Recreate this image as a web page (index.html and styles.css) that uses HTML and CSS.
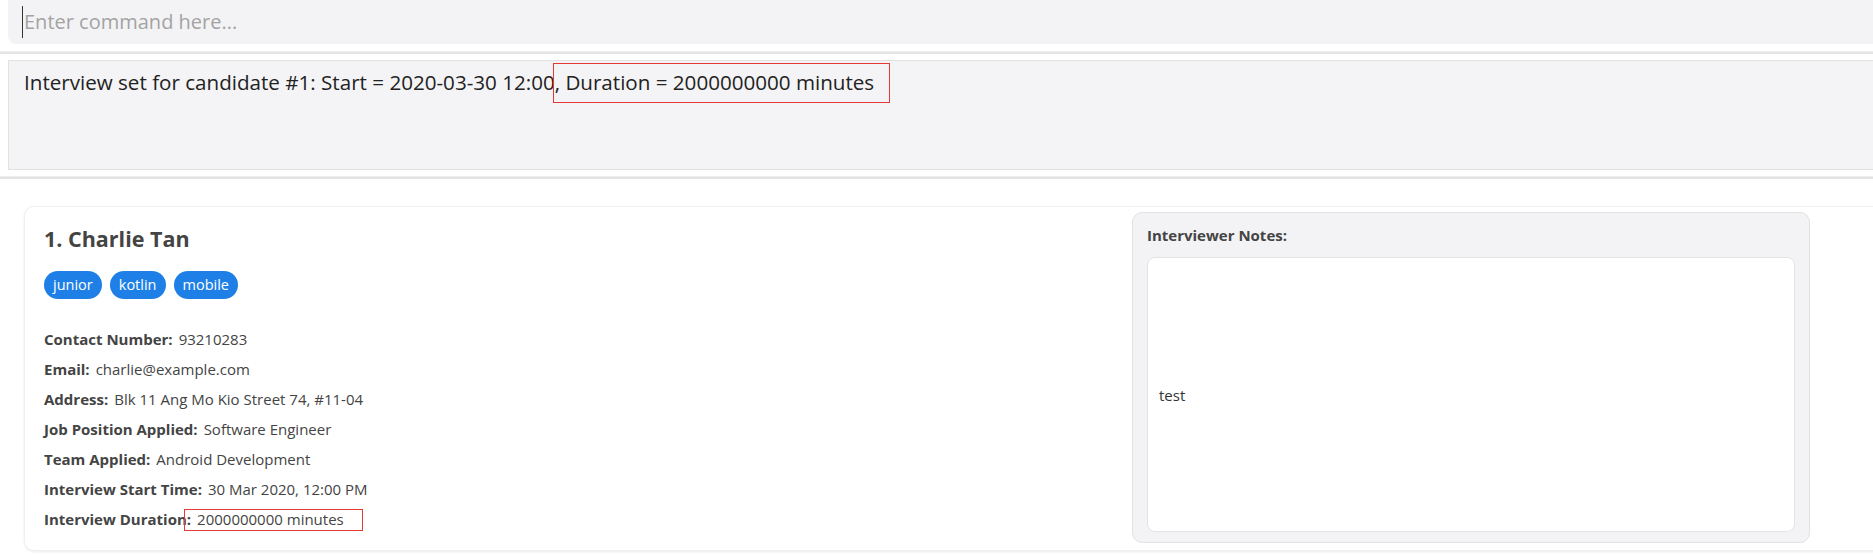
FILE: index.html
```html
<!DOCTYPE html>
<html lang="en">
<head>
<meta charset="utf-8">
<title>Candidates</title>
<link rel="stylesheet" href="styles.css">
</head>
<body>
<div class="app">
  <div class="command-bar">
    <div class="command-box">
      <span class="caret"></span>
      <span class="placeholder">Enter command here...</span>
    </div>
  </div>
  <div class="divider"></div>
  <div class="result-pane">
    <div class="result-box">
      <span>Interview set for candidate #1: Start = 2020-03-30 12:00</span><span class="mark mark-result">, Duration = 2000000000 minutes</span>
    </div>
  </div>
  <div class="divider divider-lower"></div>
  <div class="list">
    <div class="card">
      <div class="info">
        <h2 class="name">1. Charlie Tan</h2>
        <div class="tags">
          <span class="tag">junior</span>
          <span class="tag">kotlin</span>
          <span class="tag">mobile</span>
        </div>
        <div class="fields">
          <div class="field"><span class="label">Contact Number:</span><span class="value">93210283</span></div>
          <div class="field"><span class="label">Email:</span><span class="value">charlie@example.com</span></div>
          <div class="field"><span class="label">Address:</span><span class="value">Blk 11 Ang Mo Kio Street 74, #11-04</span></div>
          <div class="field"><span class="label">Job Position Applied:</span><span class="value">Software Engineer</span></div>
          <div class="field"><span class="label">Team Applied:</span><span class="value">Android Development</span></div>
          <div class="field"><span class="label">Interview Start Time:</span><span class="value">30 Mar 2020, 12:00 PM</span></div>
          <div class="field"><span class="label">Interview Duration:</span><span class="value mark mark-field">2000000000 minutes</span></div>
        </div>
      </div>
      <div class="notes">
        <div class="notes-title">Interviewer Notes:</div>
        <div class="notes-body">test</div>
      </div>
    </div>
  </div>
</div>
</body>
</html>
```

FILE: styles.css
```css
* {
  box-sizing: border-box;
}

html, body {
  margin: 0;
  padding: 0;
  background: #ffffff;
  overflow: hidden;
}

body {
  font-family: "Open Sans", "Noto Sans", sans-serif;
  color: #444444;
}

.app {
  width: 1873px;
  height: 557px;
  overflow: hidden;
}

/* command input */
.command-bar {
  padding-left: 8px;
  height: 44px;
  overflow: hidden;
}

.command-box {
  height: 52px;
  margin-top: -8px;
  margin-right: -12px;
  background: #f3f3f5;
  border-radius: 8px;
  display: flex;
  align-items: center;
  padding: 8px 0 0 14px;
}

.caret {
  width: 1px;
  height: 32px;
  background: #333333;
  margin-right: 1px;
}

.placeholder {
  font-size: 20px;
  color: #a3a3a3;
  line-height: 30px;
}

/* dividers between panes */
.divider {
  height: 3px;
  margin-top: 7px;
  background: #e4e4e4;
  border-top: 1px solid #ededed;
}

.divider-lower {
  margin-top: 6px;
}

/* result display */
.result-pane {
  padding: 6px 0 0 8px;
}

.result-box {
  height: 110px;
  margin-right: -12px;
  background: #f4f4f6;
  border: 1px solid #e2e2e2;
  padding: 6px 0 0 15px;
  font-size: 20.6px;
  line-height: 30px;
  color: #222222;
}

.mark {
  position: relative;
}

.mark::after {
  content: "";
  position: absolute;
  border: 1.5px solid #e53935;
  pointer-events: none;
}

.mark-result::after {
  left: -2px;
  right: -16px;
  top: -5px;
  bottom: -7px;
}

.mark-field::after {
  left: -13px;
  right: -19px;
  top: 0;
  bottom: -2px;
}

/* candidate list */
.list {
  padding: 27px 0 0 24px;
}

.card {
  display: flex;
  align-items: flex-start;
  height: 345px;
  margin-right: -10px;
  background: #ffffff;
  border: 1px solid #f0f0f0;
  border-radius: 10px;
  box-shadow: 0 1px 3px rgba(0, 0, 0, 0.08);
}

.info {
  flex: 1;
  padding: 17px 20px 0 19px;
}

.name {
  margin: 0;
  font-size: 21.5px;
  font-weight: 700;
  line-height: 30px;
  color: #444444;
}

.tags {
  display: flex;
  gap: 8px;
  margin-top: 17px;
}

.tag {
  height: 28px;
  line-height: 28px;
  padding: 0 9px;
  border-radius: 14px;
  background: #1e80e6;
  color: #ffffff;
  font-size: 14.5px;
}

.fields {
  margin-top: 25px;
}

.field {
  height: 30px;
  line-height: 30px;
  font-size: 15px;
  white-space: nowrap;
}

.label {
  font-weight: 700;
  margin-right: 6px;
}

.value {
  color: #444444;
}

/* interviewer notes */
.notes {
  width: 678px;
  height: 331px;
  margin: 5px 72px 0 0;
  display: flex;
  flex-direction: column;
  background: #f3f3f5;
  border: 1px solid #e2e2e5;
  border-radius: 10px;
  padding: 12px 14px 10px 14px;
}

.notes-title {
  font-size: 15px;
  font-weight: 700;
  line-height: 20px;
  color: #444444;
}

.notes-body {
  flex: 1;
  margin-top: 12px;
  background: #ffffff;
  border: 1px solid #e4e4e6;
  border-radius: 8px;
  display: flex;
  align-items: center;
  padding-left: 11px;
  font-size: 15px;
  color: #333333;
}
```
